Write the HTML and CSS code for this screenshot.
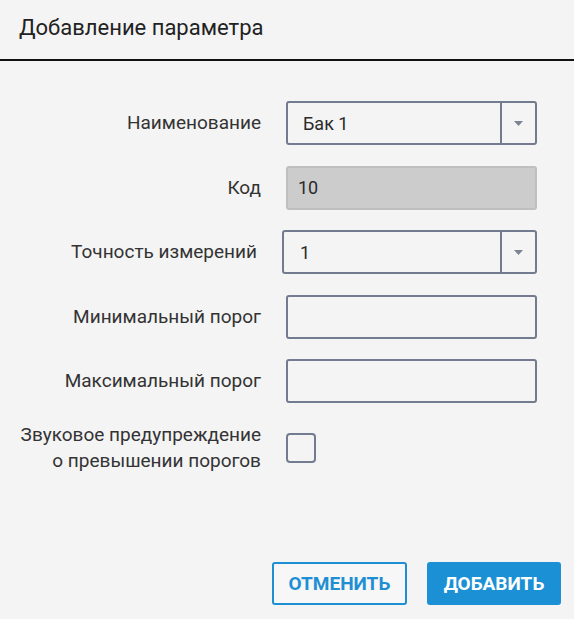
FILE: index.html
```html
<!DOCTYPE html>
<html lang="ru">
<head>
<meta charset="utf-8">
<title>Добавление параметра</title>
<link rel="stylesheet" href="styles.css">
</head>
<body>
<div class="dialog">
  <div class="header">Добавление параметра</div>
  <div class="form">
    <div class="row">
      <div class="label">Наименование</div>
      <div class="field select">
        <span class="value">Бак 1</span>
        <span class="arrow"><svg width="9" height="5" viewBox="0 0 9 5"><path d="M0 0H9L4.5 5Z" fill="#7b8494"/></svg></span>
      </div>
    </div>
    <div class="row">
      <div class="label">Код</div>
      <div class="field disabled"><span class="value">10</span></div>
    </div>
    <div class="row shift">
      <div class="label">Точность измерений</div>
      <div class="field select">
        <span class="value">1</span>
        <span class="arrow"><svg width="9" height="5" viewBox="0 0 9 5"><path d="M0 0H9L4.5 5Z" fill="#7b8494"/></svg></span>
      </div>
    </div>
    <div class="row">
      <div class="label">Минимальный порог</div>
      <div class="field"></div>
    </div>
    <div class="row">
      <div class="label">Максимальный порог</div>
      <div class="field"></div>
    </div>
    <div class="row check-row">
      <div class="label two">Звуковое предупреждение<br>о превышении порогов</div>
      <div class="checkbox"></div>
    </div>
  </div>
  <div class="footer">
    <button class="btn outline">Отменить</button>
    <button class="btn primary">Добавить</button>
  </div>
</div>
</body>
</html>
```

FILE: styles.css
```css
html, body {
  margin: 0;
  padding: 0;
  background: #f4f4f4;
}
body {
  font-family: Roboto, "Noto Sans", sans-serif;
  color: #2e2e2e;
}
.dialog {
  height: 619px;
  display: flex;
  flex-direction: column;
}
.header {
  font-size: 22px;
  line-height: 26px;
  color: #222;
  padding: 15px 0 0 19px;
  height: 44px;
  border-bottom: 2px solid #111;
}
.form {
  padding: 40px 0 0 11px;
  display: flex;
  flex-direction: column;
}
.row {
  display: flex;
  align-items: center;
  height: 44px;
  margin-bottom: 20.5px;
}
.row.shift {
  margin-left: -4px;
}
.row.shift .field {
  width: 255px;
}
.label {
  width: 250px;
  text-align: right;
  font-size: 19px;
  line-height: 22px;
  margin-right: 25px;
  color: #333;
}
.label.two {
  line-height: 26px;
}
.field {
  box-sizing: border-box;
  width: 251px;
  height: 44px;
  border: 2px solid #737c8e;
  border-radius: 3px;
  display: flex;
  align-items: center;
  font-size: 18px;
  color: #2a2a2a;
}
.field .value {
  flex: 1;
  padding-left: 15px;
}
.field.disabled {
  background: #cccccc;
  border-color: #bfbfbf;
}
.field.disabled .value {
  padding-left: 10px;
}
.select .arrow {
  width: 33px;
  height: 100%;
  border-left: 2px solid #737c8e;
  display: flex;
  align-items: center;
  justify-content: center;
}
.row.shift .value {
  padding-left: 16px;
}
.check-row {
  height: 52px;
  margin-top: -2px;
}
.checkbox {
  box-sizing: border-box;
  width: 30px;
  height: 30px;
  border: 2px solid #737c8e;
  border-radius: 4px;
}
.footer {
  margin-top: auto;
  display: flex;
  justify-content: flex-end;
  gap: 20px;
  padding: 0 13px 14px 0;
}
.btn {
  box-sizing: border-box;
  height: 43px;
  width: 135px;
  font-family: Roboto, "Noto Sans", sans-serif;
  font-size: 19px;
  font-weight: 700;
  text-transform: uppercase;
  border-radius: 3px;
  cursor: pointer;
  padding: 0;
}
.btn.outline {
  background: #f7f7f7;
  color: #1f8fd4;
  border: 2px solid #1f8fd4;
}
.btn.primary {
  width: 134px;
  background: #1c90d4;
  color: #fff;
  border: none;
}
```
